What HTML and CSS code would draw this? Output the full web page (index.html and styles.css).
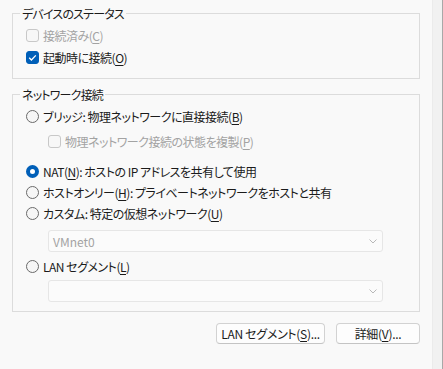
FILE: index.html
```html
<!DOCTYPE html>
<html lang="ja">
<head>
<meta charset="utf-8">
<link rel="stylesheet" href="styles.css">
</head>
<body>
<div class="window">
  <div class="content">
    <fieldset class="group g1">
      <legend>デバイスのステータス</legend>
      <div class="row r22 disabled"><span class="cb"></span><span>接続済み(<u>C</u>)</span></div>
      <div class="row r22"><span class="cb checked"><svg viewBox="0 0 13 13" width="13" height="13"><path d="M3.2 6.8 L5.4 9 L9.8 4.4" fill="none" stroke="#fff" stroke-width="1.3"/></svg></span><span>起動時に接続(<u>O</u>)</span></div>
    </fieldset>
    <fieldset class="group g2">
      <legend>ネットワーク接続</legend>
      <div class="row r22 first"><span class="rb"></span><span>ブリッジ: 物理ネットワークに直接接続(<u>B</u>)</span></div>
      <div class="row r22 sub disabled"><span class="cb"></span><span>物理ネットワーク接続の状態を複製(<u>P</u>)</span></div>
      <div class="row r21 nat"><span class="rb on"></span><span>NAT(<u>N</u>): ホストの IP アドレスを共有して使用</span></div>
      <div class="row r21"><span class="rb"></span><span>ホストオンリー(<u>H</u>): プライベートネットワークをホストと共有</span></div>
      <div class="row r21"><span class="rb"></span><span>カスタム: 特定の仮想ネットワーク(<u>U</u>)</span></div>
      <div class="select s1"><span class="latin">VMnet0</span><svg viewBox="0 0 8 5" width="8" height="5"><path d="M0.5 0.5 L4 4 L7.5 0.5" fill="none" stroke="#b8b8b8" stroke-width="1"/></svg></div>
      <div class="row r21 lan"><span class="rb"></span><span>LAN セグメント(<u>L</u>)</span></div>
      <div class="select s2"><span></span><svg viewBox="0 0 8 5" width="8" height="5"><path d="M0.5 0.5 L4 4 L7.5 0.5" fill="none" stroke="#b8b8b8" stroke-width="1"/></svg></div>
    </fieldset>
    <div class="buttons">
      <button class="btn b-lan">LAN セグメント(<u>S</u>)...</button>
      <button class="btn b-adv">詳細(<u>V</u>)...</button>
    </div>
  </div>
  <div class="strip"></div>
</div>
</body>
</html>
```
FILE: styles.css
```css
html, body {
  margin: 0;
  padding: 0;
  background: #f9f9f9;
}
body {
  font-family: "Noto Sans CJK JP", "Noto Sans", sans-serif;
  font-size: 12px;
  color: #1b1b1b;
  font-feature-settings: "palt";
  letter-spacing: -0.5px;
}
.window {
  display: flex;
  width: 443px;
  height: 369px;
}
.content {
  width: 408px;
  padding: 0 12px;
}
.strip {
  width: 9px;
  background: #f1f1f1;
  border-left: 1px solid #ebebeb;
  border-right: 1px solid #a8a8a8;
}
.group {
  margin: 0;
  border: 1px solid #dcdcdc;
  padding: 0 12px 10px 13px;
}
.group legend {
  padding: 0 2px;
  margin-left: -6px;
  line-height: 15px;
  height: 15px;
  letter-spacing: -0.8px;
}
.g1 { margin-top: 6px; }
.g2 { margin-top: 8px; padding-bottom: 9px; }
.row {
  display: flex;
  align-items: center;
  gap: 4px;
  white-space: nowrap;
}
.row u { text-underline-offset: 2px; }
.r22 { height: 22px; }
.r21 { height: 21px; }
.g1 .row:first-of-type { margin-top: 3px; }
.first { margin-top: 3px; }
.sub { margin-top: 3px; padding-left: 22px; }
.nat { margin-top: 9px; }
.disabled { color: #a3a3a3; }
.cb {
  box-sizing: border-box;
  width: 13px;
  height: 13px;
  border: 1px solid #858585;
  border-radius: 3px;
  background: #f6f6f6;
  flex: none;
  display: flex;
}
.disabled .cb {
  border-color: #c8c8c8;
  background: #f7f7f7;
}
.cb.checked {
  background: #005fb8;
  border-color: #005fb8;
}
.cb.checked svg { margin: -1px; }
.rb {
  box-sizing: border-box;
  width: 13px;
  height: 13px;
  border: 1px solid #6a6a6a;
  border-radius: 50%;
  background: #f6f6f6;
  flex: none;
}
.rb.on {
  background: #fff;
  border: 4px solid #005fb8;
}
.select {
  box-sizing: border-box;
  height: 22px;
  margin-left: 22px;
  margin-right: 24px;
  border: 1px solid #e6e6e6;
  border-radius: 3px;
  background: #fbfbfb;
  display: flex;
  align-items: center;
  justify-content: space-between;
  padding: 0 5px 0 4px;
  color: #a3a3a3;
}
.latin { letter-spacing: 0; }
.s1 { margin-top: 6px; }
.lan { margin-top: 4px; }
.s2 { margin-top: 3px; }
.buttons {
  display: flex;
  justify-content: flex-end;
  gap: 11px;
  margin-top: 11px;
}
.btn {
  box-sizing: border-box;
  height: 21px;
  border: 1px solid #d2d2d2;
  border-bottom-color: #c4c4c4;
  border-radius: 4px;
  background: #fdfdfd;
  font: inherit;
  font-feature-settings: "palt";
  letter-spacing: -0.3px;
  color: #1b1b1b;
  padding: 0;
  line-height: 19px;
}
.btn u { text-underline-offset: 2px; }
.b-lan { width: 109px; }
.b-adv { width: 84px; }
```
